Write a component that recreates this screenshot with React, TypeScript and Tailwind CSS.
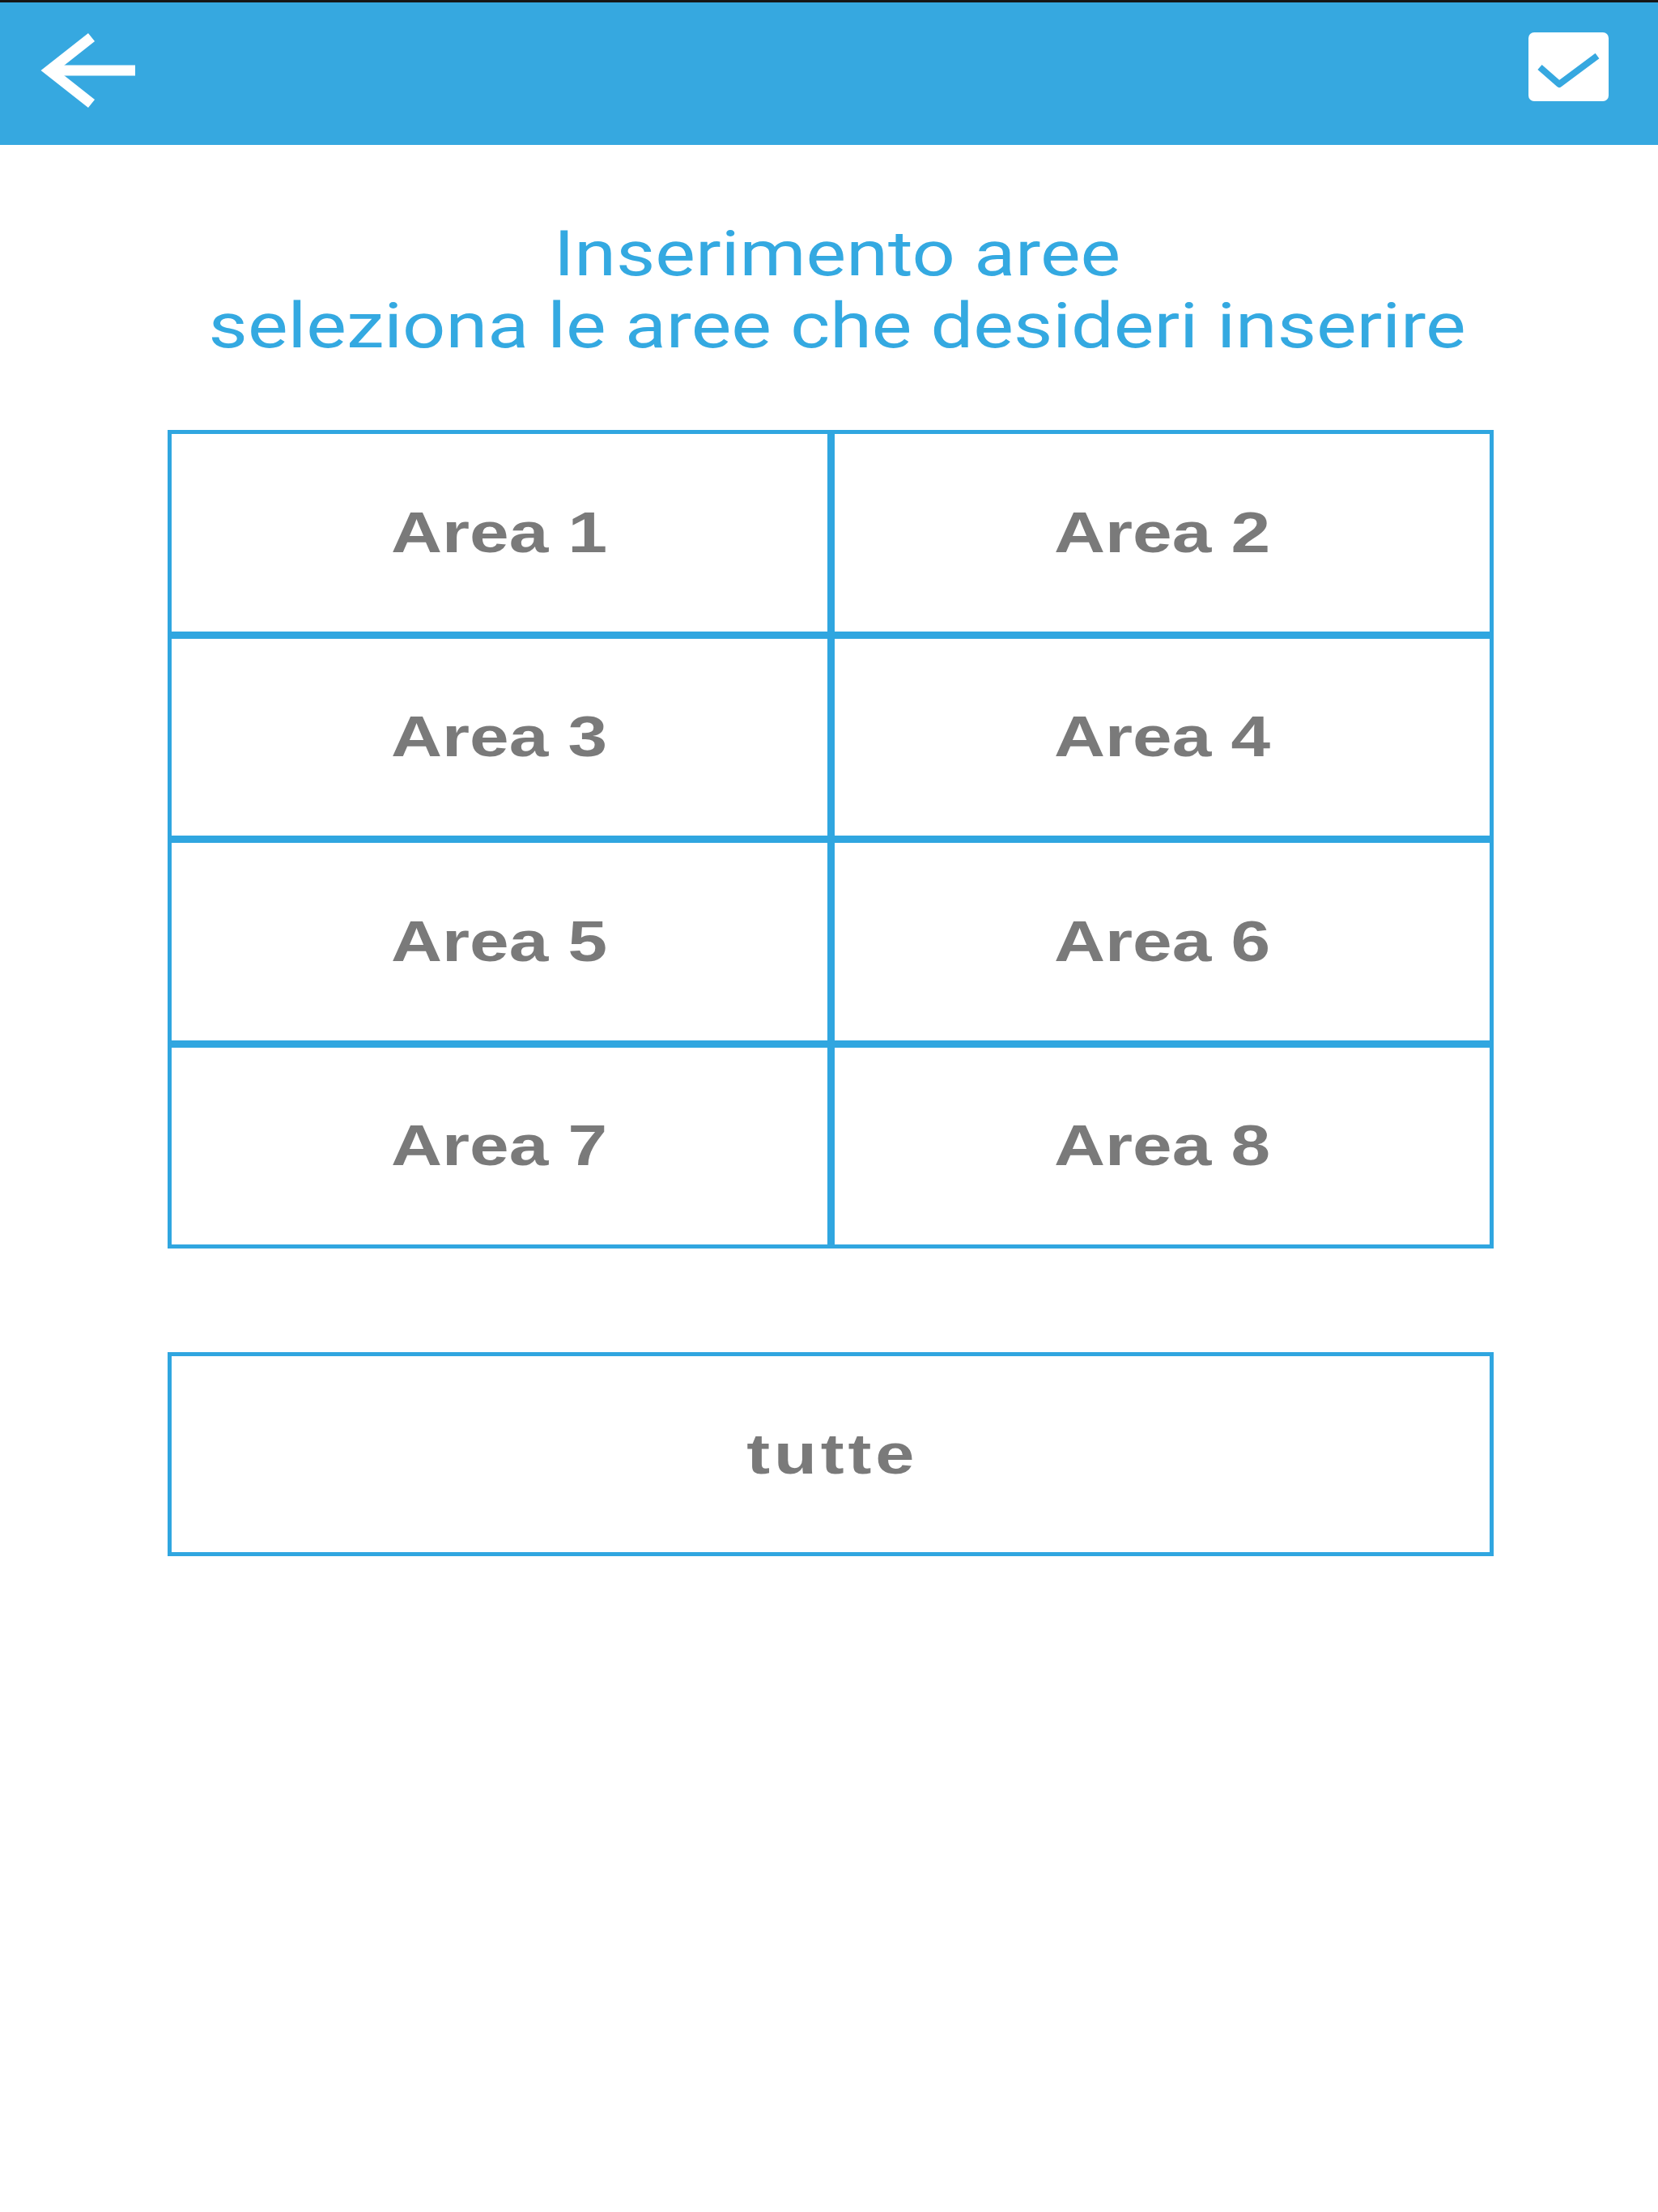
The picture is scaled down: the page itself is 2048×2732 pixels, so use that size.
import React from "react";

const areas = ["Area 1", "Area 2", "Area 3", "Area 4", "Area 5", "Area 6", "Area 7", "Area 8"];

export default function App() {
  return (
    <div className="min-h-[2732px] w-[2048px] overflow-hidden bg-white">
      <header className="flex h-[179px] items-center justify-between border-t-[3px] border-[#161616] bg-[#36a8e0]">
        <svg width="180" height="176" viewBox="0 0 180 176" fill="none">
          <path d="M113 43 L61 84 L113 125" stroke="#ffffff" strokeWidth="13" strokeLinejoin="miter" />
          <path d="M64 84 H167" stroke="#ffffff" strokeWidth="13" />
        </svg>
        <svg width="200" height="176" viewBox="0 0 200 176" fill="none">
          <rect x="40" y="37" width="99" height="85" rx="7" fill="#ffffff" />
          <path d="M54 80 L78 101 L125 66" stroke="#36a8e0" strokeWidth="8" strokeLinejoin="round" />
        </svg>
      </header>

      <main className="flex flex-col">
        <div className="flex justify-center pl-[20px] pt-[90px]">
          <div
            className="inline-block scale-x-[1.2] text-center text-[78px] leading-[89px] text-[#34a9e1]"
            style={{ fontFamily: "Roboto, 'Liberation Sans', sans-serif" }}
          >
            <div>Inserimento aree</div>
            <div>seleziona le aree che desideri inserire</div>
          </div>
        </div>

        <div className="ml-[207px] mt-[84px] grid h-[1011px] w-[1638px] grid-cols-2 grid-rows-4 gap-[9px] border-[5px] border-[#30a6e0] bg-[#30a6e0]">
          {areas.map((a) => (
            <div key={a} className="flex items-center justify-center bg-white">
              <span
                className="inline-block scale-x-[1.23] text-[71px] font-bold text-[#7a7a7a]"
                style={{ fontFamily: "'Liberation Sans', Arial, sans-serif" }}
              >
                {a}
              </span>
            </div>
          ))}
        </div>

        <div className="ml-[207px] mt-[128px] flex h-[252px] w-[1638px] items-center justify-center border-[5px] border-[#30a6e0]">
          <span
            className="inline-block scale-x-[1.22] pl-[4px] text-[71px] font-bold tracking-[4px] text-[#7a7a7a]"
            style={{ fontFamily: "'Liberation Sans', Arial, sans-serif" }}
          >
            tutte
          </span>
        </div>
      </main>
    </div>
  );
}
